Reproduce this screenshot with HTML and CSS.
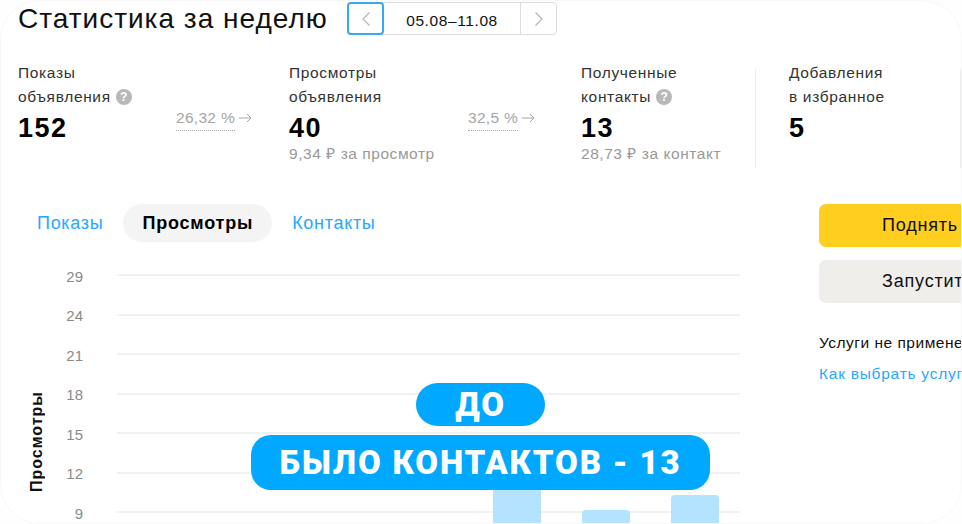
FILE: index.html
```html
<!DOCTYPE html>
<html lang="ru">
<head>
    <meta charset="UTF-8">
    <meta name="viewport" content="width=device-width, initial-scale=1.0">
    <title>Статистика за неделю</title>
    <link rel="stylesheet" href="styles.css">
</head>
<body>
    <div class="card">
        <div class="head">
            <h1>Статистика за неделю</h1>
            <div class="pager">
                <button class="pager-btn active">
                    <svg width="10" height="14" viewBox="0 0 10 14"><path d="M8.5 .5 2 7l6.500 6.500" fill="none" stroke="#b5b5b5" stroke-width="1.2"/></svg>
                </button>
                <div class="pager-date">05.08–11.08</div>
                <button class="pager-btn next">
                    <svg width="10" height="14" viewBox="0 0 10 14"><path d="M1.500 .5 8 7l-6.500 6.500" fill="none" stroke="#b5b5b5" stroke-width="1.2"/></svg>
                </button>
            </div>
        </div>

        <div class="stats">
            <div class="stat stat-shows">
                <div class="stat-label">Показы<br>объявления <span class="hint">?</span></div>
                <div class="stat-value">152</div>
            </div>
            <div class="conv">
                <span class="conv-num">26,32 %</span>
                <svg class="conv-arrow" width="13" height="10" viewBox="0 0 13 10"><path d="M0 5h12M8 1l4 4-4 4" fill="none" stroke="#a6a6a6" stroke-width="1"/></svg>
            </div>
            <div class="stat stat-views">
                <div class="stat-label">Просмотры<br>объявления</div>
                <div class="stat-value">40</div>
                <div class="stat-sub">9,34 ₽ за просмотр</div>
            </div>
            <div class="conv">
                <span class="conv-num">32,5 %</span>
                <svg class="conv-arrow" width="13" height="10" viewBox="0 0 13 10"><path d="M0 5h12M8 1l4 4-4 4" fill="none" stroke="#a6a6a6" stroke-width="1"/></svg>
            </div>
            <div class="stat stat-contacts">
                <div class="stat-label">Полученные<br>контакты <span class="hint">?</span></div>
                <div class="stat-value">13</div>
                <div class="stat-sub">28,73 ₽ за контакт</div>
            </div>
            <div class="sep"></div>
            <div class="stat stat-fav">
                <div class="stat-label">Добавления<br>в избранное</div>
                <div class="stat-value">5</div>
            </div>
            <div class="sep"></div>
        </div>

        <div class="main">
            <div class="left">
                <div class="tabs">
                    <a class="tab">Показы</a>
                    <a class="tab tab-active">Просмотры</a>
                    <a class="tab">Контакты</a>
                </div>
                <div class="chart">
                    <div class="axis-title">Просмотры</div>
                    <div class="grid">
                        <div class="grid-row"><span class="tick">29</span><i class="line"></i></div>
                        <div class="grid-row"><span class="tick">24</span><i class="line"></i></div>
                        <div class="grid-row"><span class="tick">21</span><i class="line"></i></div>
                        <div class="grid-row"><span class="tick">18</span><i class="line"></i></div>
                        <div class="grid-row"><span class="tick">15</span><i class="line"></i></div>
                        <div class="grid-row"><span class="tick">12</span><i class="line"></i></div>
                        <div class="grid-row"><span class="tick">9</span><i class="line"></i></div>
                    </div>
                    <div class="bars">
                        <div class="bar" style="height:60px"></div>
                        <div class="bar" style="height:14px"></div>
                        <div class="bar" style="height:29px"></div>
                    </div>
                </div>
            </div>
            <div class="side">
                <div class="btn btn-yellow">Поднять</div>
                <div class="btn btn-gray">Запустить</div>
                <div class="side-note">Услуги не применены</div>
                <a class="side-link">Как выбрать услугу</a>
            </div>
        </div>

        <div class="badges">
            <div class="badge badge-small">ДО</div>
            <div class="badge">БЫЛО КОНТАКТОВ - 13</div>
        </div>
    </div>
</body>
</html>
```

FILE: styles.css
```css
* {
    margin: 0;
    padding: 0;
    box-sizing: border-box;
}

body {
    width: 962px;
    height: 524px;
    overflow: hidden;
    background: #fefefe;
    font-family: 'Liberation Sans', Arial, sans-serif;
    color: #111;
}

.card {
    position: relative;
    width: 962px;
    height: 524px;
    background: #fff;
    border: 1px solid #f8f8f8;
    border-radius: 40px;
    overflow: hidden;
}

.head {
    display: flex;
    align-items: flex-start;
    height: 60px;
    padding: 1px 0 0 17px;
}

h1 {
    width: 329px;
    font-size: 28px;
    line-height: 33px;
    font-weight: 400;
    letter-spacing: 1px;
    white-space: nowrap;
}

.pager {
    display: flex;
    width: 210px;
    height: 33px;
    border: 1px solid #ddd;
    border-radius: 4px;
}

.pager-btn {
    display: flex;
    align-items: center;
    justify-content: center;
    width: 36px;
    margin: -1px 0;
    border: none;
    background: none;
}

.pager-btn.active {
    width: 37px;
    margin-left: -1px;
    border: 2px solid #38a8f5;
    border-radius: 4px;
}

.pager-btn.next {
    border-left: 1px solid #ddd;
}

.pager-date {
    flex: 1;
    font-size: 15.5px;
    line-height: 35px;
    letter-spacing: .6px;
    text-align: center;
}

.stats {
    display: flex;
    height: 108px;
    padding-left: 17px;
}

.stat-shows { width: 158px; }
.stat-views { width: 179px; }
.stat-contacts { width: 174px; }
.stat-fav { width: 204px; padding-left: 33px; }

.sep {
    width: 1px;
    height: 99px;
    margin-top: 8px;
    background: #ebebeb;
}

.stat-label {
    font-size: 15.5px;
    line-height: 24px;
    letter-spacing: .65px;
    color: #333;
    white-space: nowrap;
}

.hint {
    display: inline-block;
    width: 16px;
    height: 16px;
    border-radius: 50%;
    background: #b8b8b8;
    color: #fff;
    font-size: 12px;
    font-weight: 700;
    letter-spacing: 0;
    line-height: 16px;
    text-align: center;
    vertical-align: 1px;
}

.stat-value {
    margin-top: 4px;
    font-size: 27px;
    line-height: 30px;
    font-weight: 700;
    letter-spacing: 1.5px;
    color: #000;
}

.stat-sub {
    margin-top: 1px;
    font-size: 15.5px;
    line-height: 20px;
    letter-spacing: .55px;
    color: #999;
    white-space: nowrap;
}

.conv {
    display: flex;
    align-items: flex-start;
    width: 113px;
    padding-top: 48px;
    font-size: 15.5px;
    line-height: 18px;
    letter-spacing: .3px;
    color: #a6a6a6;
    white-space: nowrap;
}

.conv-num {
    padding-bottom: 3px;
    border-bottom: 1px dotted #a6a6a6;
}

.conv-arrow {
    margin: 4px 0 0 4px;
}

.main {
    display: flex;
    padding-top: 35px;
}

.left {
    flex: none;
    width: 818px;
}

.tabs {
    display: flex;
    align-items: center;
    gap: 20px;
    height: 38px;
    padding-left: 36px;
}

.tab {
    font-size: 18px;
    letter-spacing: .7px;
    color: #27a8ff;
}

.tab-active {
    display: block;
    padding: 0 19px;
    border-radius: 19px;
    background: #f4f4f4;
    color: #000;
    font-weight: 700;
    letter-spacing: .8px;
    line-height: 38px;
}

.chart {
    position: relative;
    height: 250px;
    margin-top: 32px;
}

.axis-title {
    position: absolute;
    left: 26px;
    top: 117px;
    writing-mode: vertical-rl;
    transform: rotate(180deg);
    font-size: 16px;
    font-weight: 700;
    letter-spacing: 1px;
    line-height: 20px;
    color: #111;
}

.grid {
    display: flex;
    flex-direction: column;
    gap: 37.5px;
    width: 739px;
}

.grid-row {
    display: flex;
    align-items: center;
    height: 2px;
}

.tick {
    width: 82px;
    padding-top: 2px;
    font-size: 15px;
    color: #8a8a8a;
    text-align: right;
}

.line {
    display: block;
    flex: 1;
    height: 2px;
    margin-left: 34px;
    background: #f1f1f1;
}

.bars {
    position: absolute;
    left: 492px;
    bottom: 0;
    display: flex;
    align-items: flex-end;
    gap: 41px;
}

.bar {
    width: 48px;
    border-radius: 4px 4px 0 0;
    background: #b3e3ff;
}

.side {
    flex: 1;
    font-size: 15.5px;
    letter-spacing: .5px;
    white-space: nowrap;
}

.btn {
    width: 260px;
    height: 43px;
    padding-left: 63px;
    border-radius: 7px;
    font-size: 18px;
    letter-spacing: .8px;
    line-height: 43px;
}

.btn-yellow {
    background: #ffce1f;
}

.btn-gray {
    margin-top: 13px;
    background: #efeeea;
}

.side-note {
    margin-top: 31px;
    line-height: 18px;
}

.side-link {
    display: block;
    margin-top: 13px;
    line-height: 18px;
    letter-spacing: .75px;
    color: #27a8ff;
}

.badges {
    position: absolute;
    left: 250px;
    top: 382px;
    display: flex;
    flex-direction: column;
    align-items: center;
    gap: 9px;
    width: 459px;
}

.badge {
    width: 459px;
    height: 55px;
    border-radius: 20px;
    background: #00a9ff;
    color: #fff;
    font-family: Roboto, sans-serif;
    font-size: 33px;
    font-weight: 900;
    letter-spacing: 1.85px;
    line-height: 55px;
    text-align: center;
}

.badge-small {
    width: 129px;
    height: 43px;
    border-radius: 22px;
    line-height: 43px;
}
```
